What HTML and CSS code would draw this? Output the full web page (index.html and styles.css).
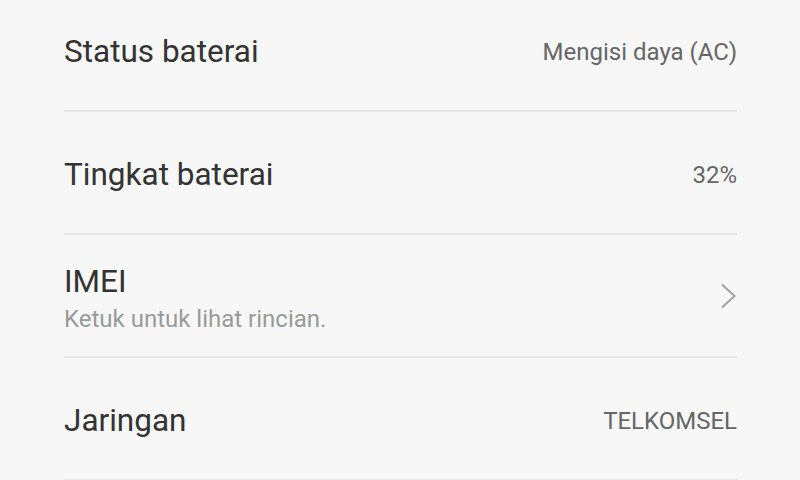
FILE: index.html
```html
<!DOCTYPE html>
<html lang="id">
<head>
    <meta charset="UTF-8">
    <meta name="viewport" content="width=device-width, initial-scale=1.0">
    <title>Status</title>
    <link rel="stylesheet" href="styles.css">
</head>
<body>
    <div class="list">
        <div class="row">
            <div class="row-text">
                <div class="row-title">Status baterai</div>
            </div>
            <div class="row-value">Mengisi daya (AC)</div>
        </div>
        <div class="row">
            <div class="row-text">
                <div class="row-title">Tingkat baterai</div>
            </div>
            <div class="row-value">32%</div>
        </div>
        <div class="row">
            <div class="row-text two-line">
                <div class="row-title">IMEI</div>
                <div class="row-sub">Ketuk untuk lihat rincian.</div>
            </div>
            <svg class="chevron" width="17" height="26" viewBox="0 0 17 26">
                <path d="M2 1.5 L14.5 13 L2 24.5" fill="none" stroke="#a0a0a0" stroke-width="2"/>
            </svg>
        </div>
        <div class="row">
            <div class="row-text">
                <div class="row-title">Jaringan</div>
            </div>
            <div class="row-value">TELKOMSEL</div>
        </div>
    </div>
</body>
</html>
```

FILE: styles.css
```css
body {
    margin: 0;
    background-color: #f7f7f7;
    font-family: Roboto, "Noto Sans", sans-serif;
    overflow: hidden;
}

.list {
    margin-top: -11px;
    padding: 0 63px 0 64px;
}

.row {
    box-sizing: border-box;
    height: 123px;
    padding-top: 4px;
    display: flex;
    align-items: center;
    justify-content: space-between;
    border-bottom: 2px solid #e6e6e6;
}

.row-title {
    font-size: 31.5px;
    line-height: 36px;
    color: #333333;
}

.two-line {
    padding-top: 3px;
}

.row-sub {
    font-size: 24px;
    line-height: 30px;
    color: #9a9a9a;
    margin-top: 4px;
}

.row-value {
    font-size: 24px;
    line-height: 30px;
    color: #666666;
}

.chevron {
    display: block;
    margin-top: -4px;
}
```
